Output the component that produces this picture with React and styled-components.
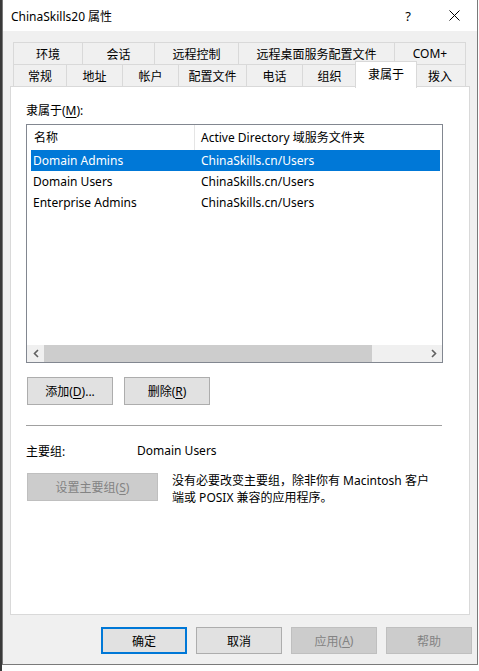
import React from "react";
import styled, { createGlobalStyle } from "styled-components";

const GlobalStyle = createGlobalStyle`
  html, body {
    margin: 0;
    padding: 0;
    background: #ffffff;
  }
  body {
    font-family: "Noto Sans", "Noto Sans CJK SC", sans-serif;
    font-size: 12px;
    color: #000;
  }
`;

const Page = styled.div`
  width: 479px;
  height: 671px;
  display: flex;
  background: linear-gradient(to right, #3a3a3a 0 2px, #ffffff 2px);
`;

const Window = styled.div`
  margin-left: 2px;
  width: 476px;
  height: 665px;
  box-sizing: border-box;
  border: 1px solid #7a7a7a;
  border-top: none;
  display: flex;
  flex-direction: column;
  background: #f0f0f0;
`;

const TitleBar = styled.div`
  height: 31px;
  background: #fff;
  display: flex;
  align-items: center;
  padding-left: 8px;
`;

const Title = styled.div`
  flex: 1;
  font-size: 12px;
  white-space: nowrap;
`;

const CaptionButton = styled.div`
  width: 46px;
  height: 31px;
  display: flex;
  align-items: center;
  justify-content: center;
  font-size: 13px;
`;

const Body = styled.div`
  flex: 1;
  display: flex;
  flex-direction: column;
  padding: 11px 5px 0 7px;
`;

const TabRow = styled.div`
  display: flex;
  height: 22px;
  padding-left: 3px;
  position: relative;
`;

const Tab = styled.div`
  width: ${(p) => p.$w}px;
  box-sizing: border-box;
  height: 22px;
  border: 1px solid #d9d9d9;
  border-left-width: ${(p) => (p.$first ? 1 : 0)}px;
  border-bottom: none;
  display: flex;
  align-items: center;
  justify-content: center;
  white-space: nowrap;
  background: #f0f0f0;
`;

const ActiveTab = styled.div`
  width: ${(p) => p.$w + 4}px;
  margin: -3px -2px 0 -2px;
  height: 27px;
  box-sizing: border-box;
  border: 1px solid #d9d9d9;
  border-bottom: none;
  background: #fff;
  position: relative;
  z-index: 2;
  display: flex;
  align-items: center;
  justify-content: center;
  padding-bottom: 3px;
  white-space: nowrap;
`;

const Panel = styled.div`
  width: 460px;
  height: 529px;
  box-sizing: border-box;
  background: #fff;
  border: 1px solid #d9d9d9;
  padding: 15px 0 0 15px;
  display: flex;
  flex-direction: column;
`;

const Label = styled.div`
  height: 17px;
  line-height: 17px;
  margin-bottom: 5px;
`;

const ListBox = styled.div`
  width: 417px;
  height: 239px;
  box-sizing: border-box;
  border: 1px solid #828790;
  display: flex;
  flex-direction: column;
  padding-left: 4px;
`;

const HeaderRow = styled.div`
  display: flex;
  height: 25px;
  align-items: center;
  padding-left: 1px;
`;

const HeaderCell = styled.div`
  width: ${(p) => p.$w}px;
  box-sizing: border-box;
  height: 25px;
  line-height: 25px;
  padding-left: ${(p) => p.$pl || 2}px;
  border-right: ${(p) => (p.$divider ? "1px solid #e5e5e5" : "none")};
  white-space: nowrap;
`;

const Row = styled.div`
  display: flex;
  height: 21px;
  align-items: center;
  width: 409px;
  background: ${(p) => (p.$selected ? "#0078d7" : "transparent")};
  color: ${(p) => (p.$selected ? "#fff" : "#000")};
`;

const Cell = styled.div`
  width: ${(p) => p.$w}px;
  padding-left: 2px;
  box-sizing: border-box;
  white-space: nowrap;
`;

const ListSpacer = styled.div`
  flex: 1;
`;

const HScroll = styled.div`
  height: 17px;
  margin-left: -4px;
  display: flex;
  align-items: center;
  background: #f0f0f0;
`;

const Arrow = styled.div`
  width: 17px;
  height: 17px;
  display: flex;
  align-items: center;
  justify-content: center;
`;

const Track = styled.div`
  flex: 1;
  height: 17px;
  display: flex;
  align-items: center;
`;

const Thumb = styled.div`
  height: 17px;
  background: #cdcdcd;
`;

const ButtonRow = styled.div`
  display: flex;
  gap: ${(p) => p.$gap || 11}px;
  margin-top: ${(p) => p.$mt || 0}px;
  margin-left: ${(p) => p.$ml || 0}px;
`;

const Button = styled.div`
  width: ${(p) => p.$w || 86}px;
  height: ${(p) => p.$h || 28}px;
  box-sizing: border-box;
  display: flex;
  align-items: center;
  justify-content: center;
  white-space: nowrap;
  background: ${(p) => (p.$disabled ? "#cccccc" : "#e1e1e1")};
  color: ${(p) => (p.$disabled ? "#838383" : "#000")};
  border: ${(p) =>
    p.$default
      ? "2px solid #0078d7"
      : p.$disabled
      ? "1px solid #bfbfbf"
      : "1px solid #adadad"};
`;

const Separator = styled.div`
  width: 416px;
  height: 1px;
  background: #a0a0a0;
  margin-top: 20px;
`;

const InfoRow = styled.div`
  display: flex;
  align-items: center;
  height: 17px;
  margin-top: 16px;
`;

const InfoLabel = styled.div`
  width: 111px;
`;

const PrimaryRow = styled.div`
  display: flex;
  margin-top: 14px;
  gap: 14px;
  margin-left: 1px;
`;

const Note = styled.div`
  width: 262px;
  line-height: 17px;
  margin-top: -1px;
`;

const Footer = styled.div`
  display: flex;
  justify-content: flex-end;
  gap: 9px;
  margin-top: 12px;
`;

const U = styled.span`
  text-decoration: underline;
  text-underline-offset: 2px;
`;

const Chevron = ({ dir }) => (
  <svg width="6" height="9" viewBox="0 0 6 9">
    <path
      d={dir === "left" ? "M5 1 L1.5 4.5 L5 8" : "M1 1 L4.5 4.5 L1 8"}
      fill="none"
      stroke="#606060"
      strokeWidth="1.6"
    />
  </svg>
);

const CloseIcon = () => (
  <svg width="11" height="11" viewBox="0 0 11 11">
    <path d="M0.5 0.5 L10.5 10.5 M10.5 0.5 L0.5 10.5" stroke="#000" strokeWidth="1" />
  </svg>
);

const row1 = [
  { t: "环境", w: 70 },
  { t: "会话", w: 72 },
  { t: "远程控制", w: 84 },
  { t: "远程桌面服务配置文件", w: 156 },
  { t: "COM+", w: 71 },
];

const row2 = [
  { t: "常规", w: 54 },
  { t: "地址", w: 56 },
  { t: "帐户", w: 56 },
  { t: "配置文件", w: 68 },
  { t: "电话", w: 56 },
  { t: "组织", w: 54 },
  { t: "隶属于", w: 58, active: true },
  { t: "拨入", w: 51 },
];

const groups = [
  { name: "Domain Admins", path: "ChinaSkills.cn/Users", selected: true },
  { name: "Domain Users", path: "ChinaSkills.cn/Users" },
  { name: "Enterprise Admins", path: "ChinaSkills.cn/Users" },
];

export default function App() {
  return (
    <Page>
      <GlobalStyle />
      <Window>
        <TitleBar>
          <Title>ChinaSkills20 属性</Title>
          <CaptionButton>?</CaptionButton>
          <CaptionButton>
            <CloseIcon />
          </CaptionButton>
        </TitleBar>
        <Body>
          <TabRow>
            {row1.map((t, i) => (
              <Tab key={t.t} $w={t.w} $first={i === 0}>
                {t.t}
              </Tab>
            ))}
          </TabRow>
          <TabRow>
            {row2.map((t, i) =>
              t.active ? (
                <ActiveTab key={t.t} $w={t.w}>
                  {t.t}
                </ActiveTab>
              ) : (
                <Tab key={t.t} $w={t.w} $first={i === 0}>
                  {t.t}
                </Tab>
              )
            )}
          </TabRow>
          <Panel>
            <Label>
              隶属于(<U>M</U>):
            </Label>
            <ListBox>
              <HeaderRow>
                <HeaderCell $w={163} $divider>
                  名称
                </HeaderCell>
                <HeaderCell $w={244} $pl={6}>
                  Active Directory 域服务文件夹
                </HeaderCell>
              </HeaderRow>
              {groups.map((g) => (
                <Row key={g.name} $selected={g.selected}>
                  <Cell $w={168}>{g.name}</Cell>
                  <Cell $w={240}>{g.path}</Cell>
                </Row>
              ))}
              <ListSpacer />
              <HScroll>
                <Arrow>
                  <Chevron dir="left" />
                </Arrow>
                <Track>
                  <Thumb style={{ width: "86%" }} />
                </Track>
                <Arrow>
                  <Chevron dir="right" />
                </Arrow>
              </HScroll>
            </ListBox>
            <ButtonRow $mt={14} $ml={1}>
              <Button>
                添加(<U>D</U>)...
              </Button>
              <Button>
                删除(<U>R</U>)
              </Button>
            </ButtonRow>
            <Separator />
            <InfoRow>
              <InfoLabel>主要组:</InfoLabel>
              <span>Domain Users</span>
            </InfoRow>
            <PrimaryRow>
              <Button $w={131} $disabled>
                设置主要组(<U>S</U>)
              </Button>
              <Note>
                没有必要改变主要组，除非你有 Macintosh 客户端或 POSIX 兼容的应用程序。
              </Note>
            </PrimaryRow>
          </Panel>
          <Footer>
            <Button $h={27} $default>
              确定
            </Button>
            <Button $h={27}>取消</Button>
            <Button $h={27} $disabled>
              应用(<U>A</U>)
            </Button>
            <Button $h={27} $disabled>
              帮助
            </Button>
          </Footer>
        </Body>
      </Window>
    </Page>
  );
}
